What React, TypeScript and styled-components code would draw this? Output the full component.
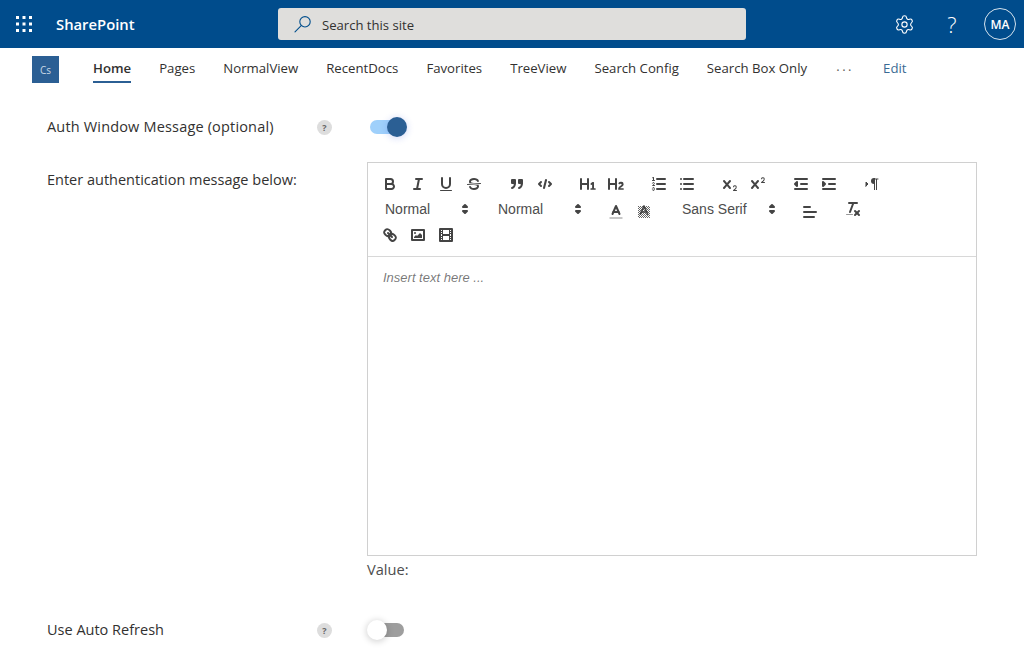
import React from 'react'
import styled, { createGlobalStyle } from 'styled-components'
import { Settings } from 'lucide-react'

const GlobalStyle = createGlobalStyle`
  html, body {
    margin: 0;
    padding: 0;
    background: #fff;
    font-family: "Open Sans", "Noto Sans", sans-serif;
    color: #323130;
  }
`

const NAV_ITEMS = ['Pages', 'NormalView', 'RecentDocs', 'Favorites', 'TreeView', 'Search Config', 'Search Box Only']

function Waffle() {
  const dots = []
  for (let y = 0; y < 3; y++) {
    for (let x = 0; x < 3; x++) {
      dots.push(<rect key={`${x}-${y}`} x={x * 6.5} y={y * 6.5} width="3" height="3" fill="#fff" />)
    }
  }
  return (
    <svg width="16" height="16" viewBox="0 0 16 16">
      {dots}
    </svg>
  )
}

function SearchGlass() {
  return (
    <svg width="18" height="18" viewBox="0 0 18 18" fill="none" stroke="#004e8c" strokeWidth="1.1">
      <circle cx="11" cy="6.8" r="5.2" />
      <line x1="7.2" y1="10.6" x2="1" y2="16.8" strokeLinecap="round" />
    </svg>
  )
}

const s = { fill: 'none', stroke: '#444', strokeWidth: 2, strokeLinecap: 'round', strokeLinejoin: 'round' } as const
const thin = { ...s, strokeWidth: 1 }
const f = { fill: '#444' }

const Icons: Record<string, React.ReactNode> = {
  bold: (
    <>
      <path {...s} d="M5,4H9.5A2.5,2.5,0,0,1,12,6.5v0A2.5,2.5,0,0,1,9.5,9H5V4Z" />
      <path {...s} d="M5,9h5.5A2.5,2.5,0,0,1,13,11.5v0A2.5,2.5,0,0,1,10.5,14H5V9Z" />
    </>
  ),
  italic: (
    <>
      <line {...s} x1="7" x2="13" y1="4" y2="4" />
      <line {...s} x1="5" x2="11" y1="14" y2="14" />
      <line {...s} x1="8" x2="10" y1="14" y2="4" />
    </>
  ),
  underline: (
    <>
      <path {...s} d="M5,3V9a4,4,0,0,0,8,0V3" />
      <rect {...f} height="1" rx=".5" width="12" x="3" y="15" />
    </>
  ),
  strike: (
    <>
      <line {...thin} x1="15.5" x2="2.5" y1="8.5" y2="9.5" />
      <path {...f} d="M9.007,8C6.542,7.791,6,7.519,6,6.5,6,5.792,7.283,5,9,5c1.571,0,2.765.679,2.969,1.309a1,1,0,0,0,1.9-.617C13.356,4.106,11.354,3,9,3,6.2,3,4,4.538,4,6.5a3.2,3.2,0,0,0,.5,1.843Z" />
      <path {...f} d="M8.984,10C11.457,10.208,12,10.479,12,11.5c0,.708-1.283,1.5-3,1.5-1.571,0-2.765-.679-2.969-1.308a1,1,0,1,0-1.9.617C4.644,13.894,6.646,15,9,15c2.8,0,5-1.538,5-3.5a3.2,3.2,0,0,0-.5-1.843Z" />
    </>
  ),
  blockquote: (
    <>
      <rect {...s} {...f} height="3" width="3" x="4" y="5" />
      <rect {...s} {...f} height="3" width="3" x="11" y="5" />
      <path {...s} d="M7,8c0,4.031-3,5-3,5" />
      <path {...s} d="M14,8c0,4.031-3,5-3,5" />
    </>
  ),
  code: (
    <>
      <polyline {...s} points="5 7 3 9 5 11" />
      <polyline {...s} points="13 7 15 9 13 11" />
      <line {...s} x1="10" x2="8" y1="5" y2="13" />
    </>
  ),
  h1: (
    <path {...f} d="M10,4V14a1,1,0,0,1-2,0V10H3v4a1,1,0,0,1-2,0V4A1,1,0,0,1,3,4V8H8V4a1,1,0,0,1,2,0Zm6.06787,9.209H14.98975V7.59863a.54085.54085,0,0,0-.605-.60547h-.62744a1.01119,1.01119,0,0,0-.748.29688L11.645,8.56641a.5435.5435,0,0,0-.022.8584l.28613.30762a.53861.53861,0,0,0,.84717.0332l.09912-.08789a1.2137,1.2137,0,0,0,.2417-.35254h.02246s-.01123.30859-.01123.60547V13.209H12.041a.54085.54085,0,0,0-.605.60547v.43945a.54085.54085,0,0,0,.605.60547h4.02686a.54085.54085,0,0,0,.605-.60547v-.43945A.54085.54085,0,0,0,16.06787,13.209Z" />
  ),
  h2: (
    <path {...f} d="M16.73975,13.81445v.43945a.54085.54085,0,0,1-.605.60547H11.855a.58392.58392,0,0,1-.64893-.60547V14.0127c0-2.90527,3.39941-3.42187,3.39941-4.55469a.77675.77675,0,0,0-.84717-.78125,1.17684,1.17684,0,0,0-.83594.38477c-.2749.26367-.561.374-.85791.13184l-.4292-.34082c-.30811-.24219-.38525-.51758-.1543-.81445a2.97155,2.97155,0,0,1,2.45361-1.17676,2.45393,2.45393,0,0,1,2.68408,2.40918c0,2.45312-3.1792,2.92676-3.27832,3.93848h2.79443A.54085.54085,0,0,1,16.73975,13.81445ZM9,3A.99974.99974,0,0,0,8,4V8H3V4A1,1,0,0,0,1,4V14a1,1,0,0,0,2,0V10H8v4a1,1,0,0,0,2,0V4A.99974.99974,0,0,0,9,3Z" />
  ),
  ol: (
    <>
      <line {...s} x1="7" x2="15" y1="4" y2="4" />
      <line {...s} x1="7" x2="15" y1="9" y2="9" />
      <line {...s} x1="7" x2="15" y1="14" y2="14" />
      <line {...thin} x1="2.5" x2="4.5" y1="5.5" y2="5.5" />
      <path {...f} d="M3.5,6A0.5,.5,0,0,1,3,5.5V3.085l-0.276.138A0.5,.5,0,0,1,2.053,3c-0.124-.247-0.023-0.324.224-0.447l1-.5A0.5,.5,0,0,1,4,2.5v3A0.5,.5,0,0,1,3.5,6Z" />
      <path {...thin} d="M4.5,10.5h-2c0-.234,1.85-1.076,1.85-2.234A0.959,0.959,0,0,0,2.5,8.156" />
      <path {...thin} d="M2.5,14.846a0.959,0.959,0,0,0,1.85-.109A0.7,0.7,0,0,0,3.75,14a0.688,0.688,0,0,0,.6-0.736,0.959,0.959,0,0,0-1.85-.109" />
    </>
  ),
  ul: (
    <>
      <line {...s} x1="6" x2="15" y1="4" y2="4" />
      <line {...s} x1="6" x2="15" y1="9" y2="9" />
      <line {...s} x1="6" x2="15" y1="14" y2="14" />
      <line {...s} x1="3" x2="3" y1="4" y2="4" />
      <line {...s} x1="3" x2="3" y1="9" y2="9" />
      <line {...s} x1="3" x2="3" y1="14" y2="14" />
    </>
  ),
  sub: (
    <>
      <path {...f} d="M15.5,15H13.861a3.858,3.858,0,0,0,1.914-2.975,1.8,1.8,0,0,0-1.6-1.751A1.921,1.921,0,0,0,12.021,11.7a0.50013,0.50013,0,1,0,.957.291h0a0.914,0.914,0,0,1,1.053-.725,0.81,0.81,0,0,1,.744.762c0,1.076-1.16971,1.86982-1.93971,2.43082A1.45639,1.45639,0,0,0,12,15.5a0.5,0.5,0,0,0,.5.5h3A0.5,0.5,0,0,0,15.5,15Z" />
      <path {...f} d="M9.65,5.241a1,1,0,0,0-1.409.108L6,7.964,3.759,5.349A1,1,0,0,0,2.192,6.59178Q2.21541,6.6213,2.241,6.649L4.684,9.5,2.241,12.35A1,1,0,0,0,3.71,13.70722q0.02557-.02768.049-0.05722L6,11.036,8.241,13.65a1,1,0,1,0,1.567-1.24277Q9.78459,12.3777,9.759,12.35L7.316,9.5,9.759,6.651A1,1,0,0,0,9.65,5.241Z" />
    </>
  ),
  sup: (
    <>
      <path {...f} d="M15.5,7H13.861a4.015,4.015,0,0,0,1.914-2.975,1.8,1.8,0,0,0-1.6-1.751A1.922,1.922,0,0,0,12.021,3.7a0.5,0.5,0,1,0,.957.291,0.917,0.917,0,0,1,1.053-.725,0.81,0.81,0,0,1,.744.762c0,1.077-1.164,1.925-1.934,2.486A1.423,1.423,0,0,0,12,7.5a0.5,0.5,0,0,0,.5.5h3A0.5,0.5,0,0,0,15.5,7Z" />
      <path {...f} d="M9.651,5.241a1,1,0,0,0-1.41.108L6,7.964,3.759,5.349a1,1,0,1,0-1.519,1.3L4.683,9.5,2.241,12.35a1,1,0,1,0,1.519,1.3L6,11.036,8.241,13.65a1,1,0,0,0,1.519-1.3L7.317,9.5,9.759,6.651A1,1,0,0,0,9.651,5.241Z" />
    </>
  ),
  outdent: (
    <>
      <line {...s} x1="3" x2="15" y1="14" y2="14" />
      <line {...s} x1="3" x2="15" y1="4" y2="4" />
      <line {...s} x1="9" x2="15" y1="9" y2="9" />
      <polygon {...s} {...f} points="5 7 5 11 3 9 5 7" />
    </>
  ),
  indent: (
    <>
      <line {...s} x1="3" x2="15" y1="14" y2="14" />
      <line {...s} x1="3" x2="15" y1="4" y2="4" />
      <line {...s} x1="9" x2="15" y1="9" y2="9" />
      <polygon {...s} {...f} points="3 7 3 11 5 9 3 7" />
    </>
  ),
  rtl: (
    <>
      <polygon {...s} {...f} strokeWidth="1" points="3 11 5 9 3 7 3 11" />
      <line {...s} x1="15" x2="11" y1="4" y2="4" strokeWidth="1" />
      <path {...f} d="M11,3a3,3,0,0,0,0,6h1V3H11Z" />
      <rect {...f} height="11" width="1" x="11" y="4" />
      <rect {...f} height="11" width="1" x="13" y="4" />
    </>
  ),
  color: (
    <>
      <line {...s} stroke="#b5b5b5" strokeWidth="1.4" x1="3" x2="15" y1="15" y2="15" />
      <polyline {...s} points="5.5 11 9 3 12.5 11" />
      <line {...s} x1="11.63" x2="6.38" y1="9" y2="9" />
    </>
  ),
  background: (
    <>
      <defs>
        <pattern id="hatch" width="2" height="2" patternUnits="userSpaceOnUse">
          <rect width="1" height="1" fill="#666" />
          <rect x="1" y="1" width="1" height="1" fill="#666" />
        </pattern>
      </defs>
      <rect x="3" y="3" width="12" height="12" fill="url(#hatch)" />
      <polyline {...s} strokeWidth="1.7" points="5.5 11 9 3 12.5 11" />
      <line {...s} strokeWidth="1.7" x1="11.63" x2="6.38" y1="9" y2="9" />
    </>
  ),
  align: (
    <>
      <line {...s} x1="3" x2="9" y1="4" y2="4" />
      <line {...s} x1="3" x2="15" y1="9" y2="9" />
      <line {...s} x1="3" x2="13" y1="14" y2="14" />
    </>
  ),
  clean: (
    <>
      <line {...s} x1="5" x2="13" y1="3" y2="3" />
      <line {...s} x1="6" x2="9.35" y1="12" y2="3" />
      <line {...s} x1="11" x2="15" y1="11" y2="15" />
      <line {...s} x1="15" x2="11" y1="11" y2="15" />
      <rect {...f} fill="#999" height="1" rx=".5" width="7" x="2" y="14" />
    </>
  ),
  link: (
    <>
      <line {...s} x1="7" x2="11" y1="7" y2="11" />
      <path {...s} d="M8.9,4.577a3.476,3.476,0,0,1,.36,4.679A3.476,3.476,0,0,1,4.577,8.9C3.185,7.5,2.035,6.4,4.217,4.217S7.5,3.185,8.9,4.577Z" />
      <path {...s} d="M13.423,9.1a3.476,3.476,0,0,0-4.679-.36,3.476,3.476,0,0,0,.36,4.679c1.392,1.392,2.5,2.542,4.679.36S14.815,10.5,13.423,9.1Z" />
    </>
  ),
  image: (
    <>
      <rect {...s} height="10" width="12" x="3" y="4" />
      <circle {...f} cx="6" cy="7" r="1" />
      <polyline {...f} points="5 12 5 11 7 9 8 10 11 7 13 9 13 12 5 12" />
    </>
  ),
  video: (
    <>
      <rect {...s} height="12" width="12" x="3" y="3" />
      <rect {...f} height="12" width="1" x="5" y="3" />
      <rect {...f} height="12" width="1" x="12" y="3" />
      <rect {...f} height="2" width="8" x="5" y="8" />
      <rect {...f} height="1" width="3" x="3" y="5" />
      <rect {...f} height="1" width="3" x="3" y="7" />
      <rect {...f} height="1" width="3" x="3" y="10" />
      <rect {...f} height="1" width="3" x="3" y="12" />
      <rect {...f} height="1" width="3" x="12" y="5" />
      <rect {...f} height="1" width="3" x="12" y="7" />
      <rect {...f} height="1" width="3" x="12" y="10" />
      <rect {...f} height="1" width="3" x="12" y="12" />
    </>
  )
}

function ToolIcon({ name, drop }: { name: string; drop?: boolean }) {
  return (
    <ToolButton $drop={drop}>
      <svg viewBox="0 0 18 18" width="18" height="18">
        {Icons[name]}
      </svg>
    </ToolButton>
  )
}

function Picker({ label, width }: { label: string; width: number }) {
  return (
    <PickerBox $width={width}>
      <span>{label}</span>
      <svg viewBox="0 0 18 18" width="18" height="18">
        <polygon {...s} strokeWidth="2" fill="#444" points="7 11 9 13 11 11 7 11" />
        <polygon {...s} strokeWidth="2" fill="#444" points="7 7 9 5 11 7 7 7" />
      </svg>
    </PickerBox>
  )
}

function Group({ names, drop }: { names: string[]; drop?: boolean }) {
  return (
    <Formats>
      {names.map(n => (
        <ToolIcon key={n} name={n} drop={drop} />
      ))}
    </Formats>
  )
}

export default function App() {
  return (
    <Page>
      <GlobalStyle />
      <SuiteBar>
        <WaffleButton>
          <Waffle />
        </WaffleButton>
        <Brand>SharePoint</Brand>
        <SearchBox>
          <SearchGlass />
          <SearchText>Search this site</SearchText>
        </SearchBox>
        <SuiteActions>
          <SuiteIcon>
            <Settings size={21} strokeWidth={1.25} color="#fff" />
          </SuiteIcon>
          <SuiteIcon>
            <HelpMark>?</HelpMark>
          </SuiteIcon>
          <Avatar>MA</Avatar>
        </SuiteActions>
      </SuiteBar>

      <NavBar>
        <SiteLogo>Cs</SiteLogo>
        <NavList>
          <NavItem $active>Home</NavItem>
          {NAV_ITEMS.map(item => (
            <NavItem key={item}>{item}</NavItem>
          ))}
          <NavMore>···</NavMore>
          <NavEdit>Edit</NavEdit>
        </NavList>
      </NavBar>

      <Form>
        <LabelCell $center>
          <FieldLabel $spacing={0.17}>Auth Window Message (optional)</FieldLabel>
          <HelpBadge>?</HelpBadge>
        </LabelCell>
        <Toggle $on>
          <Thumb $on />
        </Toggle>

        <LabelCell>
          <FieldLabel>Enter authentication message below:</FieldLabel>
        </LabelCell>
        <div>
          <Editor>
            <Toolbar>
              <ToolRow>
                <Group names={['bold', 'italic', 'underline', 'strike']} />
                <Group names={['blockquote', 'code']} />
                <Group names={['h1', 'h2']} />
                <Group names={['ol', 'ul']} />
                <Group names={['sub', 'sup']} />
                <Group names={['outdent', 'indent']} />
                <Group names={['rtl']} />
              </ToolRow>
              <ToolRow>
                <Formats>
                  <Picker label="Normal" width={98} />
                </Formats>
                <Formats>
                  <Picker label="Normal" width={98} />
                </Formats>
                <Group names={['color', 'background']} drop />
                <Formats>
                  <Picker label="Sans Serif" width={108} />
                </Formats>
                <Group names={['align']} drop />
                <Group names={['clean']} />
              </ToolRow>
              <ToolRow>
                <Group names={['link', 'image', 'video']} />
              </ToolRow>
            </Toolbar>
            <EditArea>Insert text here ...</EditArea>
          </Editor>
          <ValueText>Value:</ValueText>
        </div>

        <LabelCell $center>
          <FieldLabel>Use Auto Refresh</FieldLabel>
          <HelpBadge>?</HelpBadge>
        </LabelCell>
        <Toggle>
          <Thumb />
        </Toggle>
      </Form>
    </Page>
  )
}

const Page = styled.div`
  width: 1024px;
  height: 667px;
  overflow: hidden;
`

const SuiteBar = styled.header`
  display: flex;
  align-items: center;
  height: 48px;
  background: #004c8c;
  color: #fff;
`

const WaffleButton = styled.div`
  display: flex;
  width: 48px;
  justify-content: center;
`

const Brand = styled.div`
  width: 222px;
  padding-left: 8px;
  font-size: 14.8px;
  font-weight: 600;
`

const SearchBox = styled.div`
  display: flex;
  align-items: center;
  gap: 10px;
  box-sizing: border-box;
  width: 468px;
  height: 32px;
  padding-left: 16px;
  background: #dfdedc;
  border-radius: 3px;
`

const SearchText = styled.span`
  padding-top: 1px;
  font-size: 13.1px;
  color: #323130;
`

const SuiteActions = styled.div`
  display: flex;
  align-items: center;
  margin-left: auto;
  padding-right: 8px;
`

const SuiteIcon = styled.div`
  display: flex;
  align-items: center;
  justify-content: center;
  width: 48px;
  height: 48px;
`

const HelpMark = styled.span`
  font-size: 22px;
  font-weight: 300;
  color: #fff;
`

const Avatar = styled.div`
  display: flex;
  align-items: center;
  justify-content: center;
  box-sizing: border-box;
  width: 32px;
  height: 32px;
  margin-left: 8px;
  border: 1px solid #d5e3ee;
  border-radius: 50%;
  font-size: 12px;
  font-weight: 600;
`

const NavBar = styled.nav`
  display: flex;
  align-items: center;
  height: 43px;
  padding-left: 32px;
`

const SiteLogo = styled.div`
  display: flex;
  align-items: center;
  justify-content: center;
  width: 27px;
  height: 27px;
  background: #2b5f94;
  color: #c9d8e6;
  font-size: 10px;
  margin-right: 34px;
`

const NavList = styled.div`
  display: flex;
  align-items: center;
  gap: 28px;
  padding-bottom: 3px;
`

const NavItem = styled.div<{ $active?: boolean }>`
  position: relative;
  font-size: 13.2px;
  line-height: 30px;
  color: #323130;
  font-weight: ${p => (p.$active ? 600 : 400)};
  ${p =>
    p.$active &&
    `
    &::after {
      content: '';
      position: absolute;
      left: 0;
      right: 0;
      bottom: 0;
      height: 2px;
      background: #2b5f94;
    }
  `}
`

const NavMore = styled.div`
  width: 20px;
  padding-top: 3px;
  font-size: 13px;
  letter-spacing: 2.5px;
  text-align: center;
  color: #605e5c;
`

const NavEdit = styled.div`
  font-size: 13.2px;
  color: #3a6a94;
`

const Form = styled.main`
  display: grid;
  grid-template-columns: 320px 610px;
  padding: 18px 0 0 47px;
  row-gap: 17px;
`

const LabelCell = styled.div<{ $center?: boolean }>`
  display: flex;
  align-items: ${p => (p.$center ? 'center' : 'flex-start')};
  justify-content: space-between;
  width: 285px;
`

const FieldLabel = styled.div<{ $spacing?: number }>`
  font-size: 14.5px;
  font-weight: 500;
  line-height: 36px;
  letter-spacing: ${p => p.$spacing ?? 0}px;
  color: #323130;
`

const HelpBadge = styled.div`
  display: flex;
  align-items: center;
  justify-content: center;
  width: 15px;
  height: 15px;
  border-radius: 50%;
  background: #ddd;
  color: #666;
  font-size: 9px;
  font-weight: 700;
`

const Toggle = styled.div<{ $on?: boolean }>`
  position: relative;
  align-self: center;
  width: 34px;
  height: 14px;
  margin-left: 3px;
  border-radius: 7px;
  background: ${p => (p.$on ? '#9fd0fb' : '#9e9e9e')};
`

const Thumb = styled.div<{ $on?: boolean }>`
  position: absolute;
  top: -3px;
  left: ${p => (p.$on ? 17 : -3)}px;
  width: 20px;
  height: 20px;
  border-radius: 50%;
  background: ${p => (p.$on ? '#2b5f94' : '#fff')};
  box-shadow: 0 1px 6px 1px ${p => (p.$on ? 'rgba(60, 90, 220, 0.18)' : 'rgba(0, 0, 0, 0.16)')};
`

const Editor = styled.div`
  box-sizing: border-box;
  width: 610px;
  height: 394px;
  display: flex;
  flex-direction: column;
  border: 1px solid #d0d0d0;
  font-family: "Liberation Sans", Arial, sans-serif;
`

const Toolbar = styled.div`
  padding: 8px;
  border-bottom: 1px solid #d8d8d8;
`

const ToolRow = styled.div`
  display: flex;
  align-items: center;
  height: 25.67px;
`

const Formats = styled.div`
  display: flex;
  margin-right: 15px;
`

const ToolButton = styled.div<{ $drop?: boolean }>`
  display: flex;
  align-items: center;
  justify-content: center;
  width: 28px;
  height: 24px;
  padding-top: ${p => (p.$drop ? 6 : 0)}px;
`

const PickerBox = styled.div<{ $width: number }>`
  display: flex;
  align-items: center;
  justify-content: space-between;
  box-sizing: border-box;
  width: ${p => p.$width}px;
  height: 24px;
  padding-left: 9px;
  font-size: 14px;
  font-weight: 500;
  color: #4d4d4d;
`

const EditArea = styled.div`
  padding: 11px 15px;
  font-size: 13px;
  line-height: 19px;
  font-style: italic;
  color: rgba(0, 0, 0, 0.55);
`

const ValueText = styled.div`
  margin: 3px 0 16px;
  font-size: 14.6px;
  line-height: 20px;
  color: #4d4d4d;
`
